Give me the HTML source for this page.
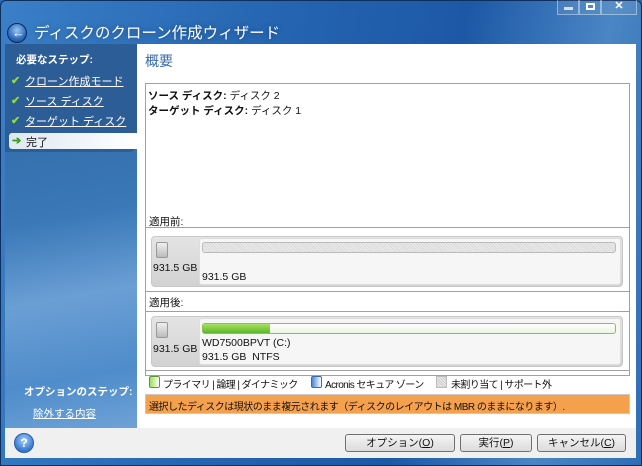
<!DOCTYPE html>
<html><head><meta charset="utf-8"><style>
*{margin:0;padding:0;box-sizing:border-box}
body{width:642px;height:466px;overflow:hidden;font-family:"Liberation Sans","Noto Sans CJK JP",sans-serif;font-size:11px;color:#111;position:relative;background:#2a67b3}
.frame{position:absolute;inset:0;background:linear-gradient(100deg,#3a7fc8 0%,#2464b0 40%,#1d58a6 65%,#4a86c4 85%,#2f6db5 100%);border:1px solid #0e2f5e;border-radius:6px 6px 0 0}
.abs{position:absolute}
.title{left:34px;top:21px;font-size:15.5px;color:#fff;text-shadow:0 0 6px rgba(0,0,0,.4)}
.back{left:7px;top:23px;width:20px;height:20px;border-radius:50%;background:radial-gradient(circle at 50% 35%,#9cc6f0,#2d6cbe 60%,#163e7a);border:1px solid #0b2a55}
.wbtn{top:0;height:15px;border:1px solid rgba(255,255,255,.4);border-top:none;background:rgba(255,255,255,.08)}
.left{left:5px;top:44px;width:132px;height:384px;background:linear-gradient(170deg,#2f64a0 0%,#3a78b8 45%,#6a9fd4 65%,#4f8ccb 85%,#6ea2d6 100%)}
.ltop{left:5px;top:44px;width:132px;height:108px;background:#2d5d96;border-radius:0 0 8px 0}
.right{left:137px;top:44px;width:499px;height:384px;background:#fff}
.bar{left:5px;top:428px;width:631px;height:30px;background:#f0f0f0}
.step{left:25px;color:#fff;text-decoration:underline;font-size:11px}
.chk{left:11px;color:#8cdc3a;font-weight:bold;font-size:11px}
.box{border:1px solid #a0a0a0;background:#fff}
.disk{border-radius:4px;background:linear-gradient(#e4e4e4,#d2d2d2);border:1px solid #c8c8c8}
.inner{background:#f6f6f6;border-radius:3px;border:1px solid #ddd}
.btn{top:434px;height:18px;border:1px solid #707070;border-radius:3px;background:linear-gradient(#f4f4f4,#dcdcdc);text-align:center;font-size:10.5px;line-height:16px}
.hdd{width:12px;height:16px;border-radius:2px;background:linear-gradient(#f0f0f0,#bbb);border:1px solid #999}
.lg{font-size:10px;letter-spacing:-0.6px;white-space:nowrap}
</style></head><body>
<div class="frame"></div>
<div class="abs back"><span style="position:absolute;left:4px;top:1px;color:#fff;font-weight:bold;font-size:13px">←</span></div>
<div class="abs title">ディスクのクローン作成ウィザード</div>
<div class="abs wbtn" style="left:557px;width:22px"><div style="margin:7px auto 0;width:9px;height:3px;background:#ddd"></div></div>
<div class="abs wbtn" style="left:579px;width:22px"><div style="margin:3px auto 0;width:9px;height:7px;border:2px solid #fff"></div></div>
<div class="abs wbtn" style="left:601px;width:36px;color:#fff;text-align:center;font-weight:bold;line-height:13px">✕</div>
<div class="abs left"></div>
<div class="abs ltop"></div>
<div class="abs right"></div>
<div class="abs bar"></div>
<div class="abs" style="left:16px;top:52px;color:#fff;font-weight:bold;font-size:10.5px">必要なステップ:</div>
<div class="abs chk" style="top:74px">✔</div><div class="abs step" style="top:73px">クローン作成モード</div>
<div class="abs chk" style="top:94px">✔</div><div class="abs step" style="top:93px">ソース ディスク</div>
<div class="abs chk" style="top:114px">✔</div><div class="abs step" style="top:113px">ターゲット ディスク</div>
<div class="abs" style="left:9px;top:133px;width:128px;height:16px;background:linear-gradient(90deg,#dfe8f0,#ffffff);border-radius:3px 0 0 3px"></div>
<div class="abs" style="left:12px;top:134px;color:#3a9a20;font-size:11px;font-weight:bold">➔</div>
<div class="abs" style="left:26px;top:134px;font-size:11px">完了</div>
<div class="abs" style="left:24px;top:384px;color:#fff;font-weight:bold;font-size:10.5px">オプションのステップ:</div>
<div class="abs" style="left:33px;top:406px;color:#fff;text-decoration:underline;font-size:10.5px">除外する内容</div>
<div class="abs" style="left:145px;top:51px;font-size:14px;color:#3a6db0">概要</div>
<div class="abs box" style="left:145px;top:83px;width:485px;height:293px"></div>
<div class="abs" style="left:148px;top:88px;font-size:10.5px"><b>ソース ディスク:</b> ディスク 2<br><b>ターゲット ディスク:</b> ディスク 1</div>
<div class="abs" style="left:146px;top:227px;width:483px;height:1px;background:#a0a0a0"></div>
<div class="abs" style="left:149px;top:214px;font-size:10.5px">適用前:</div>
<div class="abs disk" style="left:151px;top:236px;width:472px;height:51px"></div>
<div class="abs hdd" style="left:156px;top:242px"></div>
<div class="abs" style="left:153px;top:262px;font-size:10.5px">931.5 GB</div>
<div class="abs inner" style="left:199px;top:238px;width:422px;height:47px"></div>
<div class="abs" style="left:202px;top:242px;width:414px;height:11px;border-radius:3px;border:1px solid #bbb;background:repeating-linear-gradient(45deg,#d8d8d8 0 1px,#eee 1px 2px)"></div>
<div class="abs" style="left:202px;top:271px;font-size:10.5px">931.5 GB</div>
<div class="abs" style="left:146px;top:291px;width:483px;height:1px;background:#a0a0a0"></div>
<div class="abs" style="left:149px;top:295px;font-size:10.5px">適用後:</div>
<div class="abs" style="left:146px;top:311px;width:483px;height:1px;background:#a0a0a0"></div>
<div class="abs disk" style="left:151px;top:316px;width:472px;height:51px"></div>
<div class="abs hdd" style="left:156px;top:322px"></div>
<div class="abs" style="left:153px;top:343px;font-size:10.5px">931.5 GB</div>
<div class="abs inner" style="left:199px;top:318px;width:422px;height:47px"></div>
<div class="abs" style="left:202px;top:323px;width:414px;height:11px;border-radius:3px;border:1px solid #8bc34a;background:linear-gradient(#fff,#eaf6e0)"></div>
<div class="abs" style="left:203px;top:324px;width:67px;height:9px;background:linear-gradient(#a8e060,#5cb82a)"></div>
<div class="abs" style="left:202px;top:336px;font-size:10.5px;line-height:14px">WD7500BPVT (C:)<br>931.5 GB&nbsp; NTFS</div>
<div class="abs" style="left:146px;top:370px;width:483px;height:1px;background:#a0a0a0"></div>
<div class="abs" style="left:149px;top:376px;width:11px;height:12px;border-radius:2px;border:1px solid #5a9a30;background:linear-gradient(90deg,#9ee05a,#fff)"></div>
<div class="abs lg" style="left:163px;top:376px">プライマリ | 論理 | ダイナミック</div>
<div class="abs" style="left:311px;top:376px;width:11px;height:12px;border-radius:2px;border:1px solid #3a6ab0;background:linear-gradient(90deg,#4a86d8,#fff)"></div>
<div class="abs lg" style="left:325px;top:376px">Acronis セキュア ゾーン</div>
<div class="abs" style="left:436px;top:376px;width:11px;height:12px;border:1px solid #bbb;background:repeating-linear-gradient(45deg,#ccc 0 1px,#eee 1px 2px)"></div>
<div class="abs lg" style="left:451px;top:376px">未割り当て | サポート外</div>
<div class="abs" style="left:145px;top:394px;width:485px;height:20px;background:#f5a04c;border:1px solid #c8c8c8;font-size:10px;letter-spacing:-0.5px;padding:3px 0 0 3px;white-space:nowrap">選択したディスクは現状のまま複元されます（ディスクのレイアウトは MBR のままになります）.</div>
<div class="abs" style="left:14px;top:433px;width:20px;height:20px;border-radius:50%;background:radial-gradient(circle at 50% 35%,#a8d0f8,#3478d0 70%);border:1px solid #2a5ea8;color:#fff;font-weight:bold;text-align:center;line-height:18px;font-size:12px">?</div>
<div class="abs btn" style="left:345px;width:110px">オプション(<u>O</u>)</div>
<div class="abs btn" style="left:460px;width:72px">実行(<u>P</u>)</div>
<div class="abs btn" style="left:537px;width:89px">キャンセル(<u>C</u>)</div>
</body></html>
